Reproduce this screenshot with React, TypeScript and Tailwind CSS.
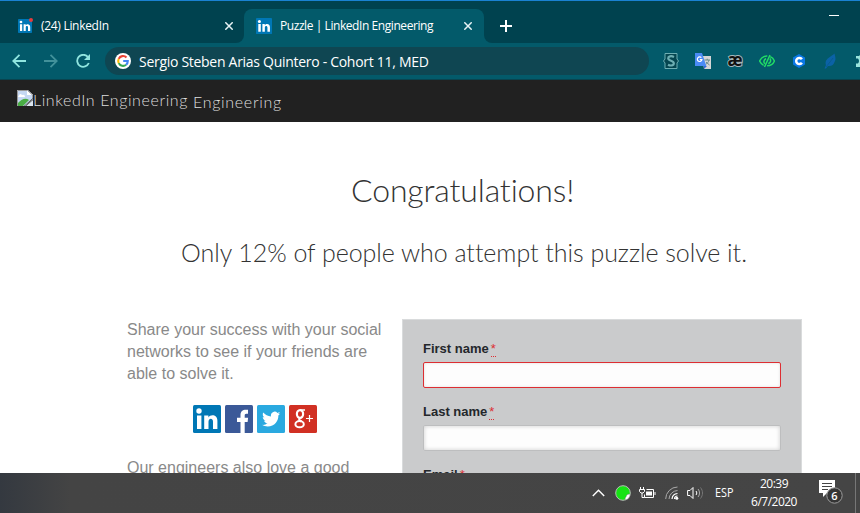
import React from "react";

function LinkedInIcon({ className }: { className: string }) {
  return (
    <svg viewBox="0 0 28 28" className={className}>
      <rect width="28" height="28" rx="1.5" fill="#0077b5" />
      <circle cx="6" cy="6" r="2.7" fill="#fff" />
      <path d="M4 10.5h4.4V24H4zM11.2 10.5h4.2v2c1.8-3.2 9-3.4 9 3.3V24H20v-7.3c0-4-4.5-3.7-4.5 0V24h-4.3z" fill="#fff" />
    </svg>
  );
}

function GoogleIcon() {
  return (
    <svg viewBox="0 0 16 16" className="size-4 shrink-0">
      <circle cx="8" cy="8" r="8" fill="#fff" />
      <g fill="none" strokeWidth="2.1">
        <path d="M11.5 4.5A4.8 4.8 0 0 0 3.7 5.9" stroke="#ea4335" />
        <path d="M3.7 5.9a4.8 4.8 0 0 0 0 4.2" stroke="#fbbc05" />
        <path d="M3.7 10.1a4.8 4.8 0 0 0 7.4 1.6" stroke="#34a853" />
        <path d="M11.1 11.7A4.7 4.7 0 0 0 12.8 8H8.2" stroke="#4285f4" />
      </g>
    </svg>
  );
}

function CloseIcon() {
  return (
    <svg viewBox="0 0 8 8" className="size-2 shrink-0" stroke="#e8f3f5" strokeWidth="1.5">
      <path d="M.3.3l7.4 7.4M7.7.3L.3 7.700" />
    </svg>
  );
}

function TabStrip() {
  return (
    <div className="flex h-[43px] border-t border-[#1a82d2] bg-[#035a6a]">
      <div className="flex h-[42px] w-[244px] items-center rounded-br-[8px] bg-[#00424f] pt-2 pl-[18px]">
        <div className="relative size-[14px] shrink-0">
          <LinkedInIcon className="size-[14px]" />
          <span className="absolute -top-[1px] -right-[1px] size-1 rounded-full bg-[#e53c3c]" />
        </div>
        <span className="ml-[9px] w-[184px] text-[12px] tracking-[-0.3px] text-white">(24) LinkedIn</span>
        <CloseIcon />
      </div>
      <div className="w-[240px] shrink-0 bg-[#00424f]">
        <div className="mt-2 flex h-[34px] items-center rounded-t-[8px] bg-[#035a6a] pl-3">
          <LinkedInIcon className="size-4 shrink-0" />
          <span className="ml-2 w-[184px] text-[12px] tracking-[-0.43px] whitespace-nowrap text-white">Puzzle | LinkedIn Engineering</span>
          <CloseIcon />
        </div>
      </div>
      <div className="flex flex-1 items-start rounded-bl-[8px] bg-[#00424f] pl-4">
        <svg viewBox="0 0 12 12" className="mt-[19px] size-3" stroke="#fff" strokeWidth="2"><path d="M6 0v12M0 6h12" /></svg>
        <span className="mt-[14px] mr-[21px] ml-auto h-px w-[10px] bg-white" />
      </div>
    </div>
  );
}

function Extensions() {
  return (
    <div className="ml-[14px] flex shrink-0 items-center gap-4">
      <svg viewBox="0 0 16 16" className="size-4">
        <path d="M2 .5h12V6l1.500 2-1.500 2v5.500H2V10L.5 8 2 6z" fill="#054650" stroke="#6daeb2" />
        <path d="M11 4C8 2.500 5.200 3.300 5.200 5.300c0 3 5.600 2 5.600 5 0 2.500-3.200 2.700-5.800 1.400" fill="none" stroke="#6daeb2" strokeWidth="2.200" />
      </svg>
      <svg viewBox="0 0 16 16" className="size-4">
        <path d="M7 3h9v13H9z" fill="#d5d5d5" />
        <path d="M9.5 7h5.5M12.2 5.7V7M14 7c-.5 2-1.8 3.5-3.5 4.5M11 9l3.500 3" stroke="#688" fill="none" />
        <path d="M9 13h3l-3 3z" fill="#3867d6" />
        <path d="M0 0h7l4.300 13H0z" fill="#4a8bf5" />
        <path d="M6.400 4.700a2.300 2.300 0 1 0 .5 2H4.800" stroke="#fff" strokeWidth="1.200" fill="none" />
      </svg>
      <svg viewBox="0 0 16 16" className="size-4 overflow-visible">
        <text x="8" y="12.500" textAnchor="middle" fontSize="18" fontWeight="700" textLength="15" lengthAdjust="spacingAndGlyphs" fill="#111" stroke="#a6b7bb" strokeWidth="2" paintOrder="stroke">æ</text>
      </svg>
      <svg viewBox="0 0 16 16" className="size-4" fill="none" stroke="#22dc65" strokeWidth="1.500">
        <path d="M8.300 3C4.800 2.800 2 5.200.6 8c1 2 2.400 3.500 4 4.300M11.300 3.600C13.300 4.500 14.700 6 15.400 8c-1.200 3-4 4.800-7.300 4.800M11 2L5.500 14M7 5.500C4.500 7 4.500 9.500 5.800 10.700M11 5.500c1.300 2 .6 4-1.700 5.200" />
      </svg>
      <svg viewBox="0 0 16 16" className="size-4">
        <path d="M8 1l6 3.500v7L8 15l-6-3.500v-7z" fill="#0b78e5" />
        <path d="M10.900 6.300A3.100 3.100 0 1 0 10.900 9.700" fill="none" stroke="#fff" strokeWidth="2.500" />
      </svg>
      <svg viewBox="0 0 16 16" className="size-4">
        <path d="M11.500 0.500c-1 1.500-4 2.500-6 4.500-3 2-3.300 5-2.500 7l-1.500 3.500h1.500L5 13c3.500.5 6-1.500 6.500-4 1.800-2.500.8-5 0-8.500z" fill="#0b62a6" />
        <path d="M3 14c2-2.500 4-5 7-9" fill="none" stroke="#075887" strokeWidth=".7" />
      </svg>
      <svg viewBox="0 0 16 16" className="size-4 shrink-0"><path d="M1 3h3v-.500h8v4.500a2 2 0 0 1 0 4v3H1v-3.500h2q2-2.500 0-5H1z" fill="#9ae4dd" /></svg>
    </div>
  );
}

function Toolbar() {
  return (
    <div className="flex h-[37px] items-center border-b border-[#09444f] bg-[#035a6a] pl-3">
      <svg viewBox="0 0 14 14" className="size-[14px] shrink-0" fill="none" stroke="#90e5df" strokeWidth="1.8"><path d="M14 7H1M7.500.8L1.200 7l6.300 6.200" /></svg>
      <svg viewBox="0 0 14 14" className="ml-[18px] size-[14px] shrink-0" fill="none" stroke="#42919a" strokeWidth="1.8"><path d="M0 7h13M6.500.8L12.800 7l-6.300 6.200" /></svg>
      <svg viewBox="0 0 14 14" className="ml-[18px] size-[14px] shrink-0" fill="none" stroke="#90e5df" strokeWidth="1.800"><path d="M11.800 2.900A6 6 0 1 0 12.800 9" /><path d="M14 0v6H8z" fill="#90e5df" stroke="none" /></svg>
      <div className="ml-[15px] flex h-7 w-[544px] shrink-0 items-center rounded-full bg-[#0f4652] pl-[10px]">
        <GoogleIcon />
        <span className="ml-2 text-[14px] tracking-[-0.29px] whitespace-nowrap text-white">Sergio Steben Arias Quintero - Cohort 11, MED</span>
      </div>
      <Extensions />
    </div>
  );
}

function Required() {
  return <span className="ml-[2px] inline-block h-4 border-b border-dotted border-[#dd2e32] align-top text-[13px] leading-[15px] font-normal text-[#dd2e32]">*</span>;
}

function SocialLinks() {
  return (
    <div className="mt-5 ml-[66px] flex gap-1">
      <LinkedInIcon className="size-7" />
      <svg viewBox="0 0 28 28" className="size-7"><rect width="28" height="28" rx="1.5" fill="#3b5998" /><path d="M15.500 28V17H12v-4.200h3.500V10c0-3.600 2.200-5.300 5.300-5.300H23v4h-1.600c-1.400 0-1.700.7-1.700 1.900v2.200h3.400l-.5 4.200h-2.900v11z" fill="#fff" /></svg>
      <svg viewBox="0 0 28 28" className="size-7"><rect width="28" height="28" rx="1.5" fill="#2aa9e0" /><path transform="translate(5 5) scale(.76)" fill="#fff" d="M24 4.600c-.9.4-1.800.7-2.800.8 1-.6 1.800-1.600 2.200-2.700-1 .6-2 1-3.100 1.200A4.900 4.900 0 0 0 11.900 8.400C7.800 8.200 4.200 6.300 1.700 3.200.4 5.400 1 8.300 3.200 9.700c-.8 0-1.600-.2-2.200-.6 0 2.300 1.600 4.400 3.900 4.900-.7.2-1.500.2-2.200.1.600 1.900 2.400 3.400 4.600 3.400A9.900 9.900 0 0 1 0 19.500c2.200 1.400 4.800 2.200 7.500 2.200 9.100 0 14.300-7.700 14-14.600 1-.7 1.800-1.600 2.500-2.500z" /></svg>
      <svg viewBox="0 0 28 28" className="size-7"><rect width="28" height="28" rx="1.5" fill="#d13023" /><g fill="none" stroke="#fff"><ellipse cx="11" cy="9" rx="3.100" ry="3.900" strokeWidth="2.200" /><path d="M11 5h5" strokeWidth="1.500" /><path d="M11.200 13c-2.200 1.700-.3 2.600 1.300 3.500" strokeWidth="2.200" /><ellipse cx="10.600" cy="19.200" rx="4.200" ry="3.100" strokeWidth="2" /><path d="M17 13.500h7M20.500 10v7" strokeWidth="1.200" /></g></svg>
    </div>
  );
}

function PuzzlePage() {
  return (
    <main className="h-[351px] overflow-hidden bg-white font-['Liberation_Sans',sans-serif]">
      <h1 className="mt-12 pl-[351px] font-[Lato,sans-serif] text-[32px] leading-10 font-light tracking-[-0.15px] whitespace-nowrap text-[#333]">Congratulations!</h1>
      <h2 className="mt-[26px] pl-[181px] font-[Lato,sans-serif] text-[25px] leading-8 font-light tracking-[-0.04px] whitespace-nowrap text-[#333]">Only 12% of people who attempt this puzzle solve it.</h2>
      <div className="mt-[51px] flex pl-[127px]">
        <section className="w-[275px] shrink-0 text-[16px] leading-[22px] whitespace-nowrap text-[#898989]">
          <p>Share your success with your social<br />networks to see if your friends are<br />able to solve it.</p>
          <SocialLinks />
          <p className="mt-6">Our engineers also love a good</p>
        </section>
        <form className="h-[220px] w-[400px] border border-[#d9dbdc] bg-[#cacbcc] px-5 pt-[21px] text-[13px] leading-[15px] font-bold text-[#24272b]">
          <label className="block h-[15px]">First name<Required /></label>
          <input aria-label="First name" className="mt-[6px] block h-[26px] w-[358px] rounded-[2px] border border-[#dd2e32] bg-[#fdfdfd] shadow-[inset_0_0_3px_#ddd] outline-none" />
          <label className="mt-4 block h-[15px]">Last name<Required /></label>
          <input aria-label="Last name" className="mt-[6px] block h-[26px] w-[358px] rounded-[2px] border border-[#bdbebf] bg-[#fdfdfd] shadow-[inset_0_0_4px_#ccc] outline-none" />
          <label className="mt-4 block h-[15px]">Email<Required /></label>
        </form>
      </div>
    </main>
  );
}

function TaskBar() {
  return (
    <footer className="flex h-10 items-center bg-[linear-gradient(90deg,#343940_0,#444_70px,#454545_100%)] text-[12px] text-white">
      <svg viewBox="0 0 13 8" className="ml-[592px] h-2 w-[13px] shrink-0" fill="none" stroke="#fff" strokeWidth="1.400"><path d="M.8 7l5.700-5.800L12.200 7" /></svg>
      <svg viewBox="0 0 16 16" className="ml-[10px] size-4 shrink-0"><circle cx="8" cy="8" r="7.300" fill="#16e314" stroke="#b6bdb6" /><path d="M15.200 9c-1.500 0-4 .5-4.200 3-1 .7-1 2-.7 3 3-.6 4.900-3 4.900-6z" fill="#fff" stroke="#777" strokeWidth=".5" /></svg>
      <svg viewBox="0 0 17 13" className="ml-2 h-[13px] w-[17px] shrink-0"><path d="M1.500 0v2M4.500 0v2M.5 2.500h5v2L4 6H2L.5 4.500zM3 6v4.500h2.500" fill="none" stroke="#fff" /><path d="M7.500 2.500h7v8h-9V7.500M16 5v3" fill="none" stroke="#fff" /><path d="M7 4.500h6v4H7z" fill="#fff" /></svg>
      <svg viewBox="0 0 14 14" className="ml-[9px] size-[14px] shrink-0" fill="none"><path d="M.7 13A12 12 0 0 1 12.500 1M4 13a9 9 0 0 1 8.500-8.500" stroke="#aaa" /><path d="M7 13a6 6 0 0 1 5.500-5.500M9.500 13a3 3 0 0 1 3-3" stroke="#fff" strokeWidth="1.200" /><circle cx="11.800" cy="12.300" r="1.500" fill="#fff" /></svg>
      <svg viewBox="0 0 17 14" className="ml-2 h-[14px] w-[17px] shrink-0" fill="none" stroke="#fff"><path d="M.6 4.500H3l3-3v11l-3-3H.6zM9 5c1 1.300 1 2.700 0 4" /><path d="M11 3c2 2.500 2 5.500 0 8" stroke="#aaa" /><path d="M13.500 1.500c2.700 3.400 2.700 7.600 0 11" stroke="#777" /></svg>
      <span className="ml-[11px] w-[20px] origin-left scale-x-[.9] whitespace-nowrap">ESP</span>
      <div className="ml-[14px] w-[50px] text-center leading-[18px] tracking-[-0.5px] whitespace-nowrap"><p>20:39</p><p className="-mx-2">6/7/2020</p></div>
      <div className="ml-5 h-7 w-6">
        <svg viewBox="0 0 24 28" className="h-7 w-6 overflow-visible"><path d="M0 1h16v13H8l-4 4v-4H0z" fill="#fff" /><path d="M3 4.500h10M3 7.500h10M3 10.500h6" stroke="#444" /><circle cx="15.500" cy="16.500" r="7.700" fill="#353535" stroke="#9b9b9b" /><text x="15.500" y="20.500" textAnchor="middle" fontSize="11" fontWeight="600" fill="#fff">6</text></svg>
      </div>
      <span className="mr-[4px] ml-auto h-full w-px bg-[#777]" />
    </footer>
  );
}

export default function App() {
  return (
    <div className="h-[513px] w-[860px] overflow-hidden font-['Open_Sans','Noto_Sans',sans-serif]">
      <TabStrip />
      <Toolbar />
      <header className="flex h-[42px] items-start bg-[#212121] pl-[17px] font-[Lato,sans-serif] text-[16px] font-light text-[#dedede]">
        <svg viewBox="0 0 16 16" className="mt-[10px] size-4 shrink-0"><path d="M0 0h11l5 5v3L7 16H0z" fill="#c5d8f3" /><path d="M10 0v5h6z" fill="#fff" /><path d="M1 7q2-5 4-2 3-1 3 2z" fill="#fff" /><path d="M0 14Q7 6 12 10l-6 6H0z" fill="#4aad45" /><path d="M16 10v6H9z" fill="#dce6ef" /><path d="M.5 16V.5h10L15.500 5v3M16 9l-8 7" fill="none" stroke="#999" /></svg>
        <span className="mt-2 w-[160px] shrink-0 tracking-[0.6px] whitespace-nowrap">LinkedIn Engineering</span>
        <span className="mt-[10px] tracking-[0.7px]">Engineering</span>
      </header>
      <PuzzlePage />
      <TaskBar />
    </div>
  );
}
